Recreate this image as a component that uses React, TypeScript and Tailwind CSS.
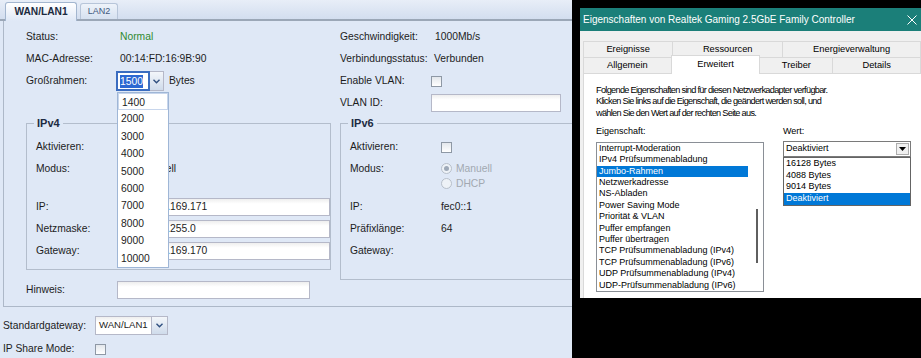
import React from 'react'

const Check = ({ className = '' }: { className?: string }) => (
  <span
    className={`inline-block h-[11px] w-[11px] border border-[#8e98a5] bg-linear-to-b from-[#e3e7ec] to-white ${className}`}
  />
)

const Radio = ({ checked = false, disabled = false }: { checked?: boolean; disabled?: boolean }) => (
  <span
    className={`flex h-[11px] w-[11px] shrink-0 items-center justify-center rounded-full border ${
      disabled ? 'border-[#b7bfca] bg-[#eef2f7]' : 'border-[#7d8896] bg-white'
    }`}>
    {checked && (
      <span className={`h-[5px] w-[5px] rounded-full ${disabled ? 'bg-[#9ea9b8]' : 'bg-[#34465f]'}`} />
    )}
  </span>
)

const Field = ({ value = '', className = '' }: { value?: string; className?: string }) => (
  <div
    className={`flex h-[18px] items-center overflow-hidden whitespace-nowrap border border-[#b5b8c8] bg-white bg-linear-to-b from-[#eeeeee] to-white to-30% pl-[3px] ${className}`}>
    {value}
  </div>
)

const Chevron = () => (
  <svg width="7" height="5" viewBox="0 0 7 5">
    <path d="M0.5 0.8 L3.5 3.8 L6.5 0.8" fill="none" stroke="#2f4f7f" strokeWidth="1.4" />
  </svg>
)

const Trigger = ({ className = '' }: { className?: string }) => (
  <div
    className={`flex items-center justify-center border border-[#b5b8c8] bg-linear-to-b from-[#f3f6fa] to-[#cfdbeb] ${className}`}>
    <Chevron />
  </div>
)

const Row = ({
  label,
  lw,
  children,
  className = 'h-[22px] items-center',
}: {
  label: string
  lw: string
  children?: React.ReactNode
  className?: string
}) => (
  <div className={`flex ${className}`}>
    <div className={`shrink-0 ${lw}`}>{label}</div>
    {children}
  </div>
)

const FRAMES = ['1400', '2000', '3000', '4000', '5000', '6000', '7000', '8000', '9000', '10000']

const NasPanel = () => (
  <div className="h-[358px] w-[572px] shrink-0 overflow-hidden bg-[#dfe8f6] font-['Liberation_Sans',Arial,sans-serif] text-[10.3px] text-[#1c1c1c]">
    <div className="flex h-[19px] items-end gap-[3px] bg-linear-to-b from-[#e8eef8] to-[#d3deef] pl-[5px]">
      <div className="relative z-10 -mb-[2px] flex h-[19px] w-[72px] items-center justify-center rounded-t-[3px] border border-b-0 border-[#a3b6cf] bg-linear-to-b from-white to-[#dfe8f6] text-[10.2px] font-bold text-[#1b2a40]">
        WAN/LAN1
      </div>
      <div className="flex h-[16px] w-[38px] items-center justify-center rounded-t-[3px] border border-b-0 border-[#b7c5d9] bg-linear-to-b from-[#eef3fa] to-[#d6e1f0] text-[9px] text-[#3f5a7e]">
        LAN2
      </div>
    </div>
    <div className="h-[2px] bg-[#9ba7b7]" />

    <div className="ml-[3px] w-[680px] border-b border-l border-[#adb8c8] pb-[7px] pl-[22px] pt-[5px]">
      <div className="flex">
        <div className="w-[314px] shrink-0">
          <Row label="Status:" lw="w-[90px]">
            <span className="pl-[4px] text-[#2f8a2f]">Normal</span>
          </Row>
          <Row label="MAC-Adresse:" lw="w-[90px]">
            <span className="pl-[4px]">00:14:FD:16:9B:90</span>
          </Row>
          <Row label="Großrahmen:" lw="w-[90px]">
            <div className="relative z-20 flex items-center">
              <div className="flex h-[20px]">
                <div className="flex w-[34px] items-center border-2 border-[#3a6cc0] bg-white pl-[2px]">
                  <span className="bg-[#2d68d2] leading-[13px] text-white">1500</span>
                </div>
                <Trigger className="w-[14px] border-l-0" />
              </div>
              <span className="ml-[5px]">Bytes</span>
              <div className="absolute left-[1px] top-[21px] w-[52px] border border-[#9fb6d6] bg-white">
                {FRAMES.map((f, i) => (
                  <div
                    key={f}
                    className={`h-[17.4px] pl-[3px] leading-[17.4px] ${i === 0 ? 'border border-[#c8d6ec] pl-[2px] leading-[15.4px]' : ''}`}>
                    {f}
                  </div>
                ))}
              </div>
            </div>
          </Row>
          <div className="h-[22px]" />
        </div>
        <div>
          <Row label="Geschwindigkeit:" lw="w-[91px]">
            <span className="pl-[4px]">1000Mb/s</span>
          </Row>
          <Row label="Verbindungsstatus:" lw="w-[91px]">
            <span className="pl-[3px]">Verbunden</span>
          </Row>
          <Row label="Enable VLAN:" lw="w-[91px]">
            <Check />
          </Row>
          <Row label="VLAN ID:" lw="w-[91px]">
            <Field className="w-[130px]" />
          </Row>
        </div>
      </div>

      <div className="mt-[2px] flex items-start gap-[9px]">
        <fieldset className="w-[305px] shrink-0 border border-[#b3bdcc]">
          <legend className="ml-[7px] px-[3px] text-[11px] font-bold leading-[14px] text-[#1d2b42]">IPv4</legend>
          <div className="pb-[7px] pl-[9px] pt-[6px]">
            <Row label="Aktivieren:" lw="w-[90px]">
              <Check className="ml-[1px]" />
            </Row>
            <Row label="Modus:" lw="w-[90px]" className="h-[38px] items-start pt-[3px]">
              <div className="leading-[15px]">
                <div className="flex items-center gap-[3px]">
                  <Radio checked />
                  Manuell
                </div>
                <div className="flex items-center gap-[3px]">
                  <Radio />
                  DHCP
                </div>
              </div>
            </Row>
            <Row label="IP:" lw="w-[90px]">
              <Field value="192.168.169.171" className="w-[204px]" />
            </Row>
            <Row label="Netzmaske:" lw="w-[90px]">
              <Field value="255.255.255.0" className="w-[204px]" />
            </Row>
            <Row label="Gateway:" lw="w-[90px]">
              <Field value="192.168.169.170" className="w-[204px]" />
            </Row>
          </div>
        </fieldset>

        <fieldset className="w-[320px] shrink-0 border border-[#b3bdcc]">
          <legend className="ml-[7px] px-[3px] text-[11px] font-bold leading-[14px] text-[#1d2b42]">IPv6</legend>
          <div className="pb-[17px] pl-[9px] pt-[6px]">
            <Row label="Aktivieren:" lw="w-[91px]">
              <Check />
            </Row>
            <Row label="Modus:" lw="w-[91px]" className="h-[38px] items-start pt-[3px]">
              <div className="leading-[15px] text-[#a2a8b1]">
                <div className="flex items-center gap-[4px]">
                  <Radio checked disabled />
                  Manuell
                </div>
                <div className="flex items-center gap-[4px]">
                  <Radio disabled />
                  DHCP
                </div>
              </div>
            </Row>
            <Row label="IP:" lw="w-[91px]">
              <span>fec0::1</span>
            </Row>
            <Row label="Präfixlänge:" lw="w-[91px]">
              <span>64</span>
            </Row>
            <Row label="Gateway:" lw="w-[91px]" />
          </div>
        </fieldset>
      </div>

      <Row label="Hinweis:" lw="w-[91px]" className="mt-[1px] h-[18px] items-center">
        <Field className="w-[193px]" />
      </Row>
    </div>

    <div className="pl-[3px] pt-[9px]">
      <Row label="Standardgateway:" lw="w-[92px]" className="h-[19px] items-center">
        <div className="flex h-[19px]">
          <Field value="WAN/LAN1" className="h-[19px] w-[57px] text-[9.6px]" />
          <Trigger className="w-[16px] border-l-0" />
        </div>
      </Row>
      <Row label="IP Share Mode:" lw="w-[92px]" className="mt-[3px] h-[22px] items-center">
        <Check />
      </Row>
    </div>
  </div>
)

const PROPS = [
  'Interrupt-Moderation',
  'IPv4 Prüfsummenabladung',
  'Jumbo-Rahmen',
  'Netzwerkadresse',
  'NS-Abladen',
  'Power Saving Mode',
  'Priorität & VLAN',
  'Puffer empfangen',
  'Puffer übertragen',
  'TCP Prüfsummenabladung (IPv4)',
  'TCP Prüfsummenabladung (IPv6)',
  'UDP Prüfsummenabladung (IPv4)',
  'UDP-Prüfsummenabladung (IPv6)',
]

const VALUES = ['16128 Bytes', '4088 Bytes', '9014 Bytes', 'Deaktiviert']

const tab = 'flex items-center justify-center border border-b-0 border-[#d9d9d9] bg-[#f0f0f0]'

const Dialog = () => (
  <div className="flex h-[290px] flex-col bg-[#f0f0f0] font-['Liberation_Sans',Arial,sans-serif] text-black">
    <div className="flex h-[23px] shrink-0 items-center justify-between bg-[#1b7f79] pl-[3px] pr-[4px] text-[10px] text-white">
      <span>Eigenschaften von Realtek Gaming 2.5GbE Family Controller</span>
      <svg width="10" height="10" viewBox="0 0 10 10">
        <path d="M0.5 0.5 L9.5 9.5 M9.5 0.5 L0.5 9.5" stroke="white" strokeWidth="1" />
      </svg>
    </div>

    <div className="flex flex-1 flex-col pl-[3px] pt-[10px] text-[9.3px]">
      <div className="flex h-[16px]">
        <div className={`${tab} w-[91px]`}>Ereignisse</div>
        <div className={`${tab} -ml-px w-[112px]`}>Ressourcen</div>
        <div className={`${tab} -ml-px w-[140px]`}>Energieverwaltung</div>
      </div>
      <div className="flex h-[16px]">
        <div className={`${tab} w-[90px]`}>Allgemein</div>
        <div className="relative z-10 -ml-px -mt-[2px] flex h-[19px] w-[91px] items-start justify-center border border-b-0 border-[#d9d9d9] bg-white pt-[2px]">
          Erweitert
        </div>
        <div className={`${tab} -ml-px w-[75px]`}>Treiber</div>
        <div className={`${tab} -ml-px w-[90px]`}>Details</div>
      </div>

      <div className="flex-1 border border-b-0 border-r-0 border-[#d9d9d9] bg-white pl-[12px] pt-[11px]">
        <div className="text-[9.2px] leading-[11.3px] tracking-[-0.7px]">
          <div>Folgende Eigenschaften sind für diesen Netzwerkadapter verfügbar.</div>
          <div>Klicken Sie links auf die Eigenschaft, die geändert werden soll, und</div>
          <div>wählen Sie den Wert auf der rechten Seite aus.</div>
        </div>

        <div className="mt-[7px] flex gap-[19px] text-[9px]">
          <div>
            <div className="leading-[11px]">Eigenschaft:</div>
            <div className="relative mt-[5px] h-[150px] w-[168px] overflow-hidden border border-[#8a8f96] bg-white">
              {PROPS.map((p, i) => (
                <div
                  key={p}
                  className={`h-[11.4px] w-[151px] whitespace-nowrap pl-[2px] leading-[11.4px] ${
                    i === 2 ? 'bg-[#0078d7] text-white' : ''
                  }`}>
                  {p}
                </div>
              ))}
              <div className="absolute right-[5px] top-[66px] h-[54px] w-[2px] bg-[#5f5f5f]" />
            </div>
          </div>
          <div>
            <div className="leading-[11px]">Wert:</div>
            <div className="relative mt-[4px] flex h-[16px] w-[128px] items-center justify-between border border-[#7a7a7a] bg-white pl-[2px] pr-[1px]">
              <span>Deaktiviert</span>
              <div className="flex h-[12px] w-[13px] items-center justify-center border border-[#adadad] bg-[#f0f0f0]">
                <svg width="7" height="4" viewBox="0 0 7 4">
                  <path d="M0 0 L7 0 L3.5 4 Z" fill="#000" />
                </svg>
              </div>
              <div className="absolute left-[-1px] top-[15px] w-[128px] border border-[#646464] bg-white">
                {VALUES.map((v, i) => (
                  <div
                    key={v}
                    className={`h-[11.7px] pl-[2px] leading-[11.7px] ${i === 3 ? 'bg-[#0078d7] text-white' : ''}`}>
                    {v}
                  </div>
                ))}
              </div>
            </div>
          </div>
        </div>
      </div>
    </div>
  </div>
)

export default function App() {
  return (
    <div className="flex h-[358px] w-[921px] overflow-hidden">
      <NasPanel />
      <div className="min-w-0 flex-1 overflow-hidden bg-black pl-[8px] pt-[8px]">
        <Dialog />
      </div>
    </div>
  )
}
